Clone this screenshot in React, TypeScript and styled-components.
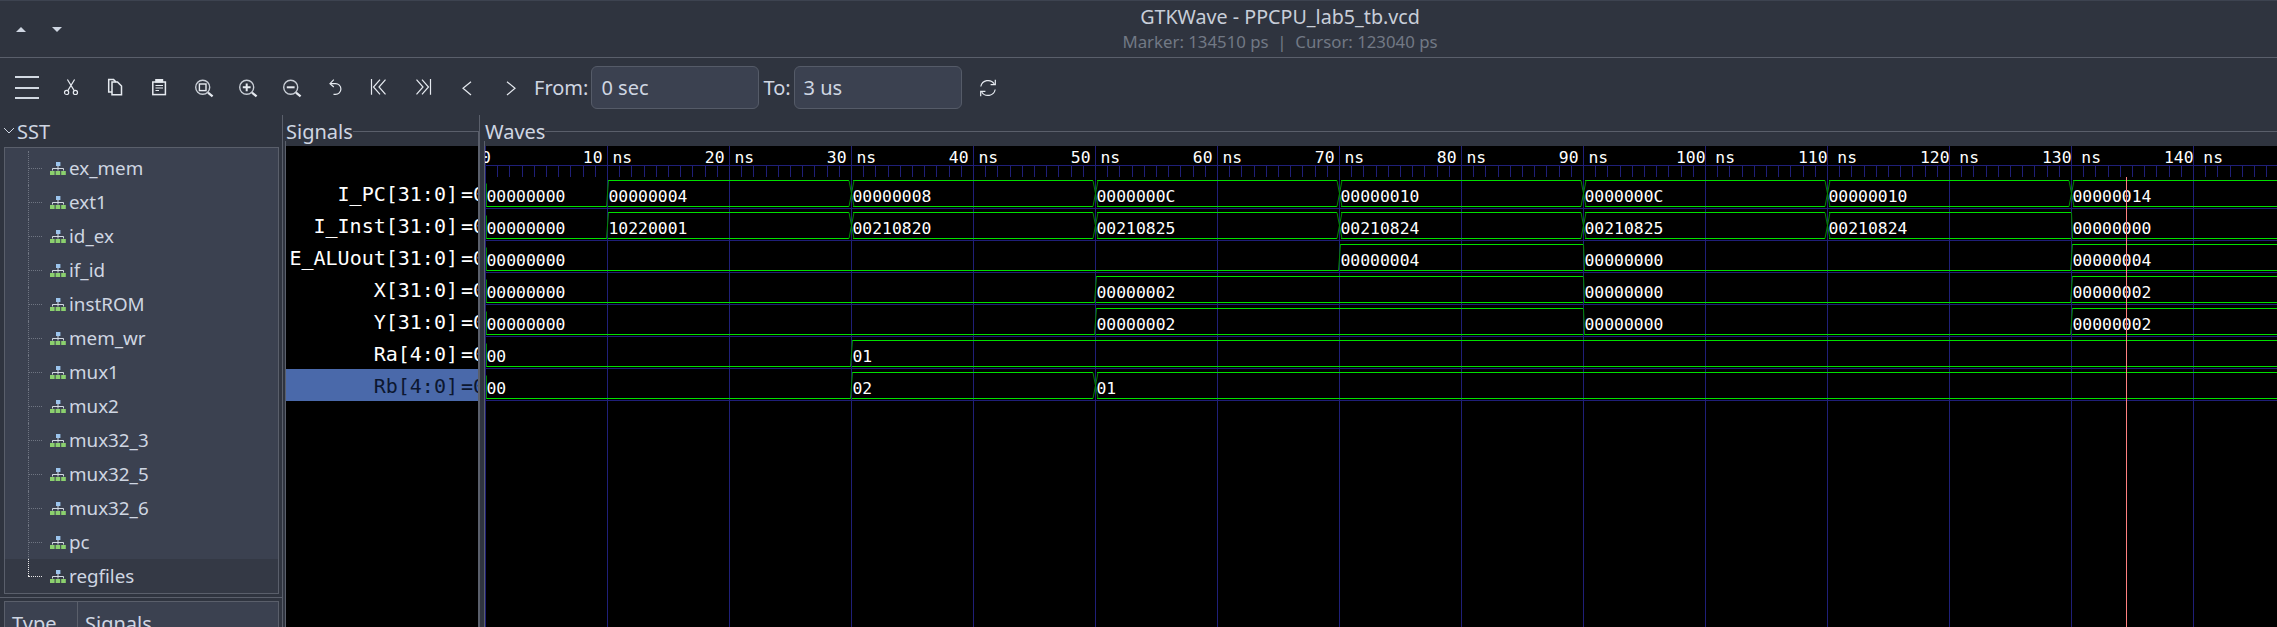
import styled, { createGlobalStyle } from "styled-components";

const bg = "#2f343f";
const panelBg = "#3b4150";
const lineColor = "#5a5f6b";
const textColor = "#cfd6e2";
const uiFont = '"Noto Sans", sans-serif';
const monoFont = '"DejaVu Sans Mono", monospace';

const navy = "#1f1f78";
const green = "#00e000";
const darkGreen = "#008a00";

const GlobalStyle = createGlobalStyle`
  html, body {
    margin: 0;
    padding: 0;
    background: ${bg};
  }
`;

const Window = styled.div`
  width: 2277px;
  height: 627px;
  overflow: hidden;
  display: flex;
  flex-direction: column;
  background: ${bg};
  color: ${textColor};
  font-family: ${uiFont};
  font-size: 20px;
`;

const HeaderBar = styled.header`
  height: 56px;
  flex: none;
  display: flex;
  align-items: center;
  padding-left: 16px;
  border-top: 1px solid #3d4350;
  border-bottom: 1px solid ${lineColor};
`;

const Arrow = styled.span<{ $down?: boolean }>`
  width: 0;
  height: 0;
  margin-right: 26px;
  margin-top: 1px;
  border-left: 5px solid transparent;
  border-right: 5px solid transparent;
  ${(p) =>
    p.$down
      ? `border-top: 5px solid ${textColor};`
      : `border-bottom: 5px solid ${textColor};`}
`;

const TitleBlock = styled.div`
  position: absolute;
  left: 880px;
  width: 800px;
  top: 4px;
  text-align: center;
`;

const Title = styled.div`
  font-size: 19.7px;
  line-height: 26px;
  color: #c8ced9;
`;

const Subtitle = styled.div`
  font-size: 16.8px;
  line-height: 24px;
  color: #727985;
  white-space: pre;
`;

const Toolbar = styled.div`
  height: 57px;
  flex: none;
  display: flex;
  align-items: center;
  padding-left: 5px;
  padding-top: 3px;
  box-sizing: border-box;
`;

const ToolButton = styled.span`
  width: 44px;
  height: 24px;
  flex: none;
  display: flex;
  justify-content: center;
  color: #e6eaf0;
`;

const ToolLabel = styled.span<{ $left: number }>`
  margin-left: ${(p) => p.$left}px;
  margin-right: 3px;
  margin-bottom: 2px;
`;

const RangeInput = styled.div`
  width: 168px;
  height: 43px;
  box-sizing: border-box;
  display: flex;
  align-items: center;
  padding-left: 9px;
  margin-bottom: 1px;
  background: ${panelBg};
  border: 1px solid #555b68;
  border-radius: 6px;
`;

const ReloadButton = styled(ToolButton)`
  margin-left: 4px;
`;

const Main = styled.div`
  flex: 1;
  min-height: 0;
  display: flex;
`;

const Sidebar = styled.aside`
  width: 282px;
  flex: none;
  display: flex;
  flex-direction: column;
`;

const TreeHeader = styled.div`
  height: 32px;
  flex: none;
  display: flex;
  align-items: center;
  padding-left: 3px;
  gap: 2px;
  font-size: 20px;
`;

const TreePanel = styled.div`
  height: 447px;
  box-sizing: border-box;
  flex: none;
  margin: 0 3px 0 4px;
  padding-top: 3px;
  background: ${panelBg};
  border: 1px solid ${lineColor};
`;

const TreeRow = styled.div<{ $hover?: boolean }>`
  height: 34px;
  display: flex;
  align-items: center;
  background: ${(p) => (p.$hover ? "#343945" : "transparent")};
`;

const Guide = styled.span<{ $last?: boolean }>`
  position: relative;
  width: 14px;
  height: 34px;
  flex: none;
  margin-left: 23px;
  margin-right: 8px;
  &::before {
    content: "";
    position: absolute;
    left: 0;
    top: 0;
    height: ${(p) => (p.$last ? "17px" : "34px")};
    border-left: 1px dotted ${(p) => (p.$last ? "#e8e8e8" : "#6f7582")};
  }
  &::after {
    content: "";
    position: absolute;
    left: 0;
    width: 14px;
    top: 17px;
    border-top: 1px dotted ${(p) => (p.$last ? "#e8e8e8" : "#6f7582")};
  }
`;

const TreeLabel = styled.span`
  margin-left: 3px;
  font-size: 18.8px;
`;

const SidebarRule = styled.div`
  height: 1px;
  flex: none;
  margin-top: 3px;
  background: ${lineColor};
`;

const ListPanel = styled.div`
  flex: 1;
  margin: 3px 3px 0 4px;
  display: flex;
  background: ${panelBg};
  border: 1px solid ${lineColor};
  border-bottom: none;
`;

const ListColumn = styled.div<{ $width?: number }>`
  width: ${(p) => (p.$width ? `${p.$width}px` : "auto")};
  flex: ${(p) => (p.$width ? "none" : "1")};
  box-sizing: border-box;
  padding: 8px 0 0 7px;
  border-right: ${(p) => (p.$width ? `1px solid ${lineColor}` : "none")};
`;

const Splitter = styled.div<{ $width: number }>`
  width: ${(p) => p.$width}px;
  flex: none;
  box-sizing: border-box;
  border-left: 1px solid ${lineColor};
`;

const Pane = styled.section<{ $width?: number }>`
  width: ${(p) => (p.$width ? `${p.$width}px` : "auto")};
  flex: ${(p) => (p.$width ? "none" : "1")};
  min-width: 0;
  display: flex;
  flex-direction: column;
`;

const PaneTitleRow = styled.div`
  height: 26px;
  flex: none;
  display: flex;
`;

const PaneTitle = styled.span`
  line-height: 34px;
  padding-left: 1px;
  font-size: 20px;
`;

const PaneRule = styled.div<{ $closed?: boolean }>`
  flex: 1;
  margin-top: 16px;
  border-top: 1px solid ${lineColor};
  border-right: ${(p) => (p.$closed ? `1px solid ${lineColor}` : "none")};
`;

const PaneFrame = styled.div<{ $closed?: boolean }>`
  flex: 1;
  min-height: 0;
  display: flex;
  padding-top: 5px;
  border-left: 1px solid ${lineColor};
  border-right: ${(p) => (p.$closed ? `1px solid ${lineColor}` : "none")};
`;

const SignalList = styled.div`
  flex: 1;
  min-width: 0;
  overflow: hidden;
  background: #000;
  padding-top: 31px;
  font-family: ${monoFont};
  font-size: 20px;
  color: #fff;
`;

const SignalRow = styled.div<{ $selected?: boolean }>`
  height: 32px;
  box-sizing: border-box;
  padding-top: 2px;
  display: flex;
  align-items: center;
  white-space: pre;
  background: ${(p) => (p.$selected ? "#4a69aa" : "transparent")};
  color: ${(p) => (p.$selected ? "#0c1730" : "#fff")};
`;

const SignalName = styled.span`
  width: 172px;
  flex: none;
  text-align: right;
`;

const SignalValue = styled.span`
  margin-left: 3px;
`;

const WaveCanvas = styled.svg`
  display: block;
  flex: none;
  background: #000;
`;

const WaveText = styled.text`
  font-family: ${monoFont};
  font-size: 16.4px;
  fill: #fff;
  white-space: pre;
`;

const modules = [
  "ex_mem",
  "ext1",
  "id_ex",
  "if_id",
  "instROM",
  "mem_wr",
  "mux1",
  "mux2",
  "mux32_3",
  "mux32_5",
  "mux32_6",
  "pc",
  "regfiles",
];

type Change = [number, string];

const signals: { name: string; changes: Change[] }[] = [
  {
    name: "I_PC[31:0]",
    changes: [
      [0, "00000000"],
      [10, "00000004"],
      [30, "00000008"],
      [50, "0000000C"],
      [70, "00000010"],
      [90, "0000000C"],
      [110, "00000010"],
      [130, "00000014"],
    ],
  },
  {
    name: "I_Inst[31:0]",
    changes: [
      [0, "00000000"],
      [10, "10220001"],
      [30, "00210820"],
      [50, "00210825"],
      [70, "00210824"],
      [90, "00210825"],
      [110, "00210824"],
      [130, "00000000"],
    ],
  },
  {
    name: "E_ALUout[31:0]",
    changes: [
      [0, "00000000"],
      [70, "00000004"],
      [90, "00000000"],
      [130, "00000004"],
    ],
  },
  {
    name: "X[31:0]",
    changes: [
      [0, "00000000"],
      [50, "00000002"],
      [90, "00000000"],
      [130, "00000002"],
    ],
  },
  {
    name: "Y[31:0]",
    changes: [
      [0, "00000000"],
      [50, "00000002"],
      [90, "00000000"],
      [130, "00000002"],
    ],
  },
  {
    name: "Ra[4:0]",
    changes: [
      [0, "00"],
      [30, "01"],
    ],
  },
  {
    name: "Rb[4:0]",
    changes: [
      [0, "00"],
      [30, "02"],
      [50, "01"],
    ],
  },
];

const T0 = 485;
const PX_PER_NS = 12.2;
const RIGHT = 2277;
const BOTTOM = 627;
const MARKER_X = 2126.5;
const isZero = (v: string) => /^0+$/.test(v);
const timeX = (t: number) => Math.round(T0 + t * PX_PER_NS);

function WaveRow({ changes, index }: { changes: Change[]; index: number }) {
  const top = 180.5 + index * 32;
  const bottom = top + 26;
  return (
    <g>
      {changes.map(([t, value], i) => {
        const x = timeX(t);
        const next = changes[i + 1];
        const prev = changes[i - 1];
        const endX = next ? timeX(next[0]) : RIGHT;
        const zero = isZero(value);
        const nextBoth = next && !zero && !isZero(next[1]);
        const prevBoth = prev && !zero && !isZero(prev[1]);
        const startX = prevBoth ? x + 2 : x + 1;
        const stopX = nextBoth ? endX - 2 : endX;
        return (
          <g key={t}>
            <line x1={startX} x2={stopX} y1={bottom} y2={bottom} stroke={green} shapeRendering="crispEdges" />
            {!zero && (
              <line x1={startX} x2={stopX} y1={top} y2={top} stroke={green} shapeRendering="crispEdges" />
            )}
            {i > 0 && prevBoth && (
              <>
                <line x1={x - 2} x2={x + 3} y1={top} y2={bottom} stroke={darkGreen} />
                <line x1={x - 2} x2={x + 3} y1={bottom} y2={top} stroke={darkGreen} />
              </>
            )}
            {i > 0 && !prevBoth && (
              <line
                x1={zero ? x + 0.5 : x - 0.5}
                x2={x + 1.5}
                y1={zero ? top : bottom}
                y2={zero ? bottom : top}
                stroke={darkGreen}
              />
            )}
            <WaveText x={x + 1.5} y={top + 21.5}>
              {value}
            </WaveText>
          </g>
        );
      })}
      <line x1={T0 + 1.5} x2={T0 + 1.5} y1={top + 3} y2={bottom} stroke={darkGreen} />
    </g>
  );
}

function Waves() {
  const minor = Array.from({ length: 150 }, (_, i) => i);
  const major = Array.from({ length: 15 }, (_, i) => i);
  return (
    <WaveCanvas
      width={RIGHT - T0}
      height={BOTTOM - 146}
      viewBox={`${T0} 146 ${RIGHT - T0} ${BOTTOM - 146}`}
    >
      <g stroke={navy} shapeRendering="crispEdges">
        <line x1={T0} x2={RIGHT} y1={165.5} y2={165.5} />
        {minor.map((i) => (
          <line key={i} x1={timeX(i) + 0.5} x2={timeX(i) + 0.5} y1={165} y2={177} />
        ))}
        {major.map((i) => (
          <line key={i} x1={timeX(i * 10) + 0.5} x2={timeX(i * 10) + 0.5} y1={146} y2={BOTTOM} />
        ))}
        {signals.map((_, i) => (
          <line key={i} x1={T0} x2={RIGHT} y1={208.5 + i * 32} y2={208.5 + i * 32} />
        ))}
      </g>
      {major.map((i) =>
        i === 0 ? (
          <WaveText key={i} x={481} y={163}>
            0
          </WaveText>
        ) : (
          <WaveText key={i} x={timeX(i * 10) + 0.5} y={163} textAnchor="middle">
            {`${i * 10} ns`}
          </WaveText>
        ),
      )}
      {signals.map((s, i) => (
        <WaveRow key={s.name} changes={s.changes} index={i} />
      ))}
      <line x1={MARKER_X} x2={MARKER_X} y1={177} y2={BOTTOM} stroke="#ff8080" shapeRendering="crispEdges" />
    </WaveCanvas>
  );
}

function Icon({ children }: { children: React.ReactNode }) {
  return (
    <svg width="24" height="24" viewBox="0 0 24 24" fill="none" stroke="currentColor" strokeWidth="1.2">
      {children}
    </svg>
  );
}

const ZoomGlass = ({ children }: { children?: React.ReactNode }) => (
  <Icon>
    <circle cx="11.7" cy="11.3" r="7" stroke="#c9ced6" strokeWidth="1.4" />
    <path d="M17 16.6 21.6 20.4" strokeWidth="2.2" />
    {children}
  </Icon>
);

const toolIcons = [
  <svg key="menu" width="24" height="24" viewBox="0 0 24 24" fill="none" stroke="#d3dae3" strokeWidth="2">
    <path d="M0 1H24M0 12H24M0 22H24" />
  </svg>,
  <Icon key="cut">
    <circle cx="7.6" cy="16.4" r="2.1" />
    <circle cx="16.4" cy="16.4" r="2.1" />
    <path d="M8.8 14.6 15.6 3.5M15.2 14.6 8.4 3.5" />
  </Icon>,
  <Icon key="copy">
    <path d="M9 16H5.7V3.6H10.6L13 6" strokeWidth="1.5" />
    <path d="M9 6H14.5L18.5 10V18.7H9Z" strokeWidth="1.5" />
  </Icon>,
  <Icon key="paste">
    <rect x="5.8" y="6" width="12.6" height="12.6" strokeWidth="1.5" />
    <rect x="8.2" y="3" width="8" height="3.6" fill="currentColor" strokeWidth="0" />
    <path d="M8.5 9.5H16M8.5 12H16M8.5 14.5H12" />
  </Icon>,
  <ZoomGlass key="fit">
    <rect x="8.4" y="8" width="6.6" height="6.6" strokeWidth="1.4" />
  </ZoomGlass>,
  <ZoomGlass key="in">
    <path d="M7.8 11.3H15.6M11.7 7.4V15.2" strokeWidth="2" />
  </ZoomGlass>,
  <ZoomGlass key="out">
    <path d="M7.8 11.3H15.6" strokeWidth="2" />
  </ZoomGlass>,
  <Icon key="undo">
    <path d="M7.5 7.6H12.5A5.4 5.4 0 0 1 12.5 18.4H10.5" />
    <path d="M10.8 3.6 7 7.6 10.8 11" />
  </Icon>,
  <Icon key="first">
    <path d="M4.5 3V18.8M13 3.6 6.5 11 13 18.4M18.5 3.6 12 11 18.5 18.4" />
  </Icon>,
  <Icon key="last">
    <path d="M19.5 3V18.8M11 3.6 17.5 11 11 18.4M5.5 3.6 12 11 5.5 18.4" />
  </Icon>,
  <Icon key="prev">
    <path d="M16 5.7 8 12.3 16 19" />
  </Icon>,
  <Icon key="next">
    <path d="M8 5.7 16 12.3 8 19" />
  </Icon>,
];

function ModuleIcon() {
  return (
    <svg width="16" height="13" viewBox="0 0 16 13">
      <rect x="6" y="0" width="4.4" height="4" fill="#9cc5ee" />
      <path d="M8 4V6.5M2.5 8.5V6.5H13.5V8.5M8 6.5V8.5" stroke="#d3dae3" fill="none" />
      <rect x="0" y="9" width="4.6" height="4" fill="#8bd06e" />
      <rect x="5.6" y="9" width="4.6" height="4" fill="#8bd06e" />
      <rect x="11.2" y="9" width="4.6" height="4" fill="#8bd06e" />
    </svg>
  );
}

export default function App() {
  return (
    <>
      <GlobalStyle />
      <Window>
        <HeaderBar>
          <Arrow />
          <Arrow $down />
          <TitleBlock>
            <Title>GTKWave - PPCPU_lab5_tb.vcd</Title>
            <Subtitle>Marker: 134510 ps  |  Cursor: 123040 ps</Subtitle>
          </TitleBlock>
        </HeaderBar>
        <Toolbar>
          {toolIcons.map((icon, i) => (
            <ToolButton key={i}>{icon}</ToolButton>
          ))}
          <ToolLabel $left={1}>From:</ToolLabel>
          <RangeInput>0 sec</RangeInput>
          <ToolLabel $left={4}>To:</ToolLabel>
          <RangeInput>3 us</RangeInput>
          <ReloadButton>
            <Icon>
              <path d="M4.8 10.5A7.4 7.4 0 0 1 18.3 8" />
              <path d="M19.3 3.8V8.6H14.6" />
              <path d="M19.2 13.5A7.4 7.4 0 0 1 5.7 16" />
              <path d="M4.7 20.2V15.4H9.4" />
            </Icon>
          </ReloadButton>
        </Toolbar>
        <Main>
          <Sidebar>
            <TreeHeader>
              <svg width="12" height="12" viewBox="0 0 12 12" fill="none" stroke={textColor}>
                <path d="M1 3 6 8 11 3" />
              </svg>
              SST
            </TreeHeader>
            <TreePanel>
              {modules.map((m, i) => {
                const last = i === modules.length - 1;
                return (
                  <TreeRow key={m} $hover={last}>
                    <Guide $last={last} />
                    <ModuleIcon />
                    <TreeLabel>{m}</TreeLabel>
                  </TreeRow>
                );
              })}
            </TreePanel>
            <SidebarRule />
            <ListPanel>
              <ListColumn $width={73}>Type</ListColumn>
              <ListColumn>Signals</ListColumn>
            </ListPanel>
          </Sidebar>
          <Splitter $width={3} />
          <Pane $width={194}>
            <PaneTitleRow>
              <PaneTitle>Signals</PaneTitle>
              <PaneRule $closed />
            </PaneTitleRow>
            <PaneFrame $closed>
              <SignalList>
                {signals.map((s, i) => (
                  <SignalRow key={s.name} $selected={i === 6}>
                    <SignalName>{s.name}</SignalName>
                    <SignalValue>=0</SignalValue>
                  </SignalRow>
                ))}
              </SignalList>
            </PaneFrame>
          </Pane>
          <Splitter $width={5} />
          <Pane>
            <PaneTitleRow>
              <PaneTitle>Waves</PaneTitle>
              <PaneRule />
            </PaneTitleRow>
            <PaneFrame>
              <Waves />
            </PaneFrame>
          </Pane>
        </Main>
      </Window>
    </>
  );
}
